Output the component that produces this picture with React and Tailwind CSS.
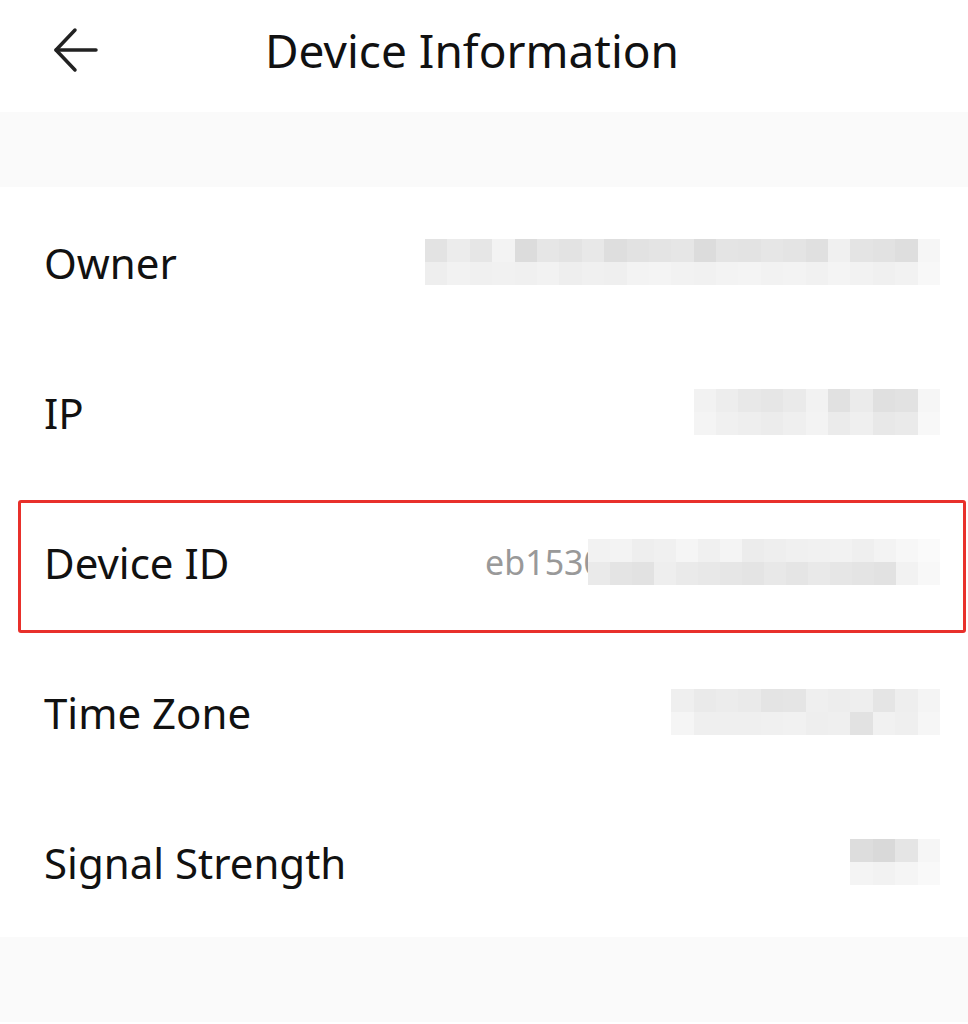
const rows = [
    {
        label: 'Owner',
        cols: ['#e3e3e3', '#ececec', '#e6e6e6', '#f3f3f3', '#dcdcdc', '#e6e6e6', '#e3e3e3', '#e8e8e8', '#dedede', '#e2e2e2', '#e4e4e4', '#e6e6e6', '#dcdcdc', '#e4e4e4', '#e3e3e3', '#e6e6e6', '#e4e4e4', '#e0e0e0', '#f0f0f0', '#e4e4e4', '#e2e2e2', '#dedede', '#f6f6f6'],
        cols2: ['#eeeeee', '#f2f2f2', '#f0f0f0', '#f1f1f1', '#f0f0f0', '#f2f2f2', '#eeeeee', '#f0f0f0', '#efefef', '#f3f3f3', '#f4f4f4', '#f2f2f2', '#f1f1f1', '#f3f3f3', '#f4f4f4', '#f2f2f2', '#f3f3f3', '#f1f1f1', '#f4f4f4', '#f2f2f2', '#f0f0f0', '#f2f2f2', '#f8f8f8'],
    },
    {
        label: 'IP',
        cols: ['#f2f2f2', '#ededed', '#e8e8e8', '#e6e6e6', '#eaeaea', '#f2f2f2', '#e1e1e1', '#ebebeb', '#e0e0e0', '#e2e2e2', '#f6f6f6'],
        cols2: ['#f4f4f4', '#f0f0f0', '#eeeeee', '#ececec', '#efefef', '#f3f3f3', '#ebebeb', '#efefef', '#e8e8e8', '#eaeaea', '#f8f8f8'],
    },
    {
        label: 'Device ID',
        id: true,
        cols: ['#f2f2f2', '#f3f3f3', '#eeeeee', '#f0f0f0', '#f5f5f5', '#f0f0f0', '#f4f4f4', '#ececec', '#eeeeee', '#f0f0f0', '#f1f1f1', '#f2f2f2', '#efefef', '#f3f3f3', '#f7f7f7', '#fafafa'],
        cols2: ['#eaeaea', '#e4e4e4', '#e2e2e2', '#eeeeee', '#eaeaea', '#e8e8e8', '#e6e6e6', '#e4e4e4', '#e8e8e8', '#e5e5e5', '#e9e9e9', '#e6e6e6', '#e4e4e4', '#e2e2e2', '#f2f2f2', '#f8f8f8'],
    },
    {
        label: 'Time Zone',
        cols: ['#efefef', '#eaeaea', '#ececec', '#eaeaea', '#e4e4e4', '#e5e5e5', '#efefef', '#ededed', '#eeeeee', '#e5e5e5', '#eeeeee', '#f4f4f4'],
        cols2: ['#f5f5f5', '#efefef', '#efefef', '#efefef', '#f0f0f0', '#f1f1f1', '#eeeeee', '#efefef', '#e2e2e2', '#f1f1f1', '#efefef', '#f6f6f6'],
    },
    {
        label: 'Signal Strength',
        cols: ['#dddddd', '#d9d9d9', '#e5e5e5', '#f6f6f6'],
        cols2: ['#f4f4f4', '#f2f2f2', '#f5f5f5', '#f9f9f9'],
    },
];

function Mosaic({ row, cell = 'w-[22.4px]', className = '' }) {
    return (
        <div className={`flex flex-col ${className}`}>
            <div className="flex">
                {row.cols.map((c, i) => (
                    <div key={i} className={`${cell} h-[23px]`} style={{ background: c }} />
                ))}
            </div>
            <div className="flex">
                {row.cols2.map((c, i) => (
                    <div key={i} className={`${cell} h-[23px]`} style={{ background: c }} />
                ))}
            </div>
        </div>
    );
}

function BackArrow() {
    return (
        <svg viewBox="0 0 46 46" className="w-[46px] h-[46px]" fill="none" stroke="#222" strokeWidth="3.5" strokeLinecap="round" strokeLinejoin="round">
            <path d="M22 3 L3 23 L22 43" />
            <path d="M3 23 H43" />
        </svg>
    );
}

export default function App() {
    return (
        <div className="w-[968px] h-[1024px] bg-white overflow-hidden" style={{ fontFamily: '"Noto Sans", "Open Sans", sans-serif' }}>
            {/* Header */}
            <div className="h-[112px] flex items-center pb-[12px]">
                <div className="ml-[53px]">
                    <BackArrow />
                </div>
                <h1 className="ml-[166px] text-[46px] text-[#111]">Device Information</h1>
            </div>
            <div className="h-[75px] bg-[#fafafa]" />

            {/* List */}
            <div className="flex flex-col">
                {rows.map((row) => (
                    <div key={row.label} className="relative h-[150px] flex items-center justify-between pl-[44px] pr-[28px]">
                        <span className="text-[42px] text-[#111]">{row.label}</span>
                        <div className="flex items-center">
                            {row.id && <span className="text-[34px] text-[#999]">eb1530</span>}
                            <Mosaic
                                row={row}
                                cell={row.id ? 'w-[22px]' : 'w-[22.4px]'}
                                className={row.id ? 'relative -ml-[15px]' : ''}
                            />
                        </div>
                        {row.id && (
                            <div className="absolute left-[18px] right-[2px] top-[13px] h-[133px] border-[3px] border-[#e8302b] rounded-[3px]" />
                        )}
                    </div>
                ))}
            </div>

            <div className="h-[85px] bg-[#fafafa]" />
        </div>
    );
}
